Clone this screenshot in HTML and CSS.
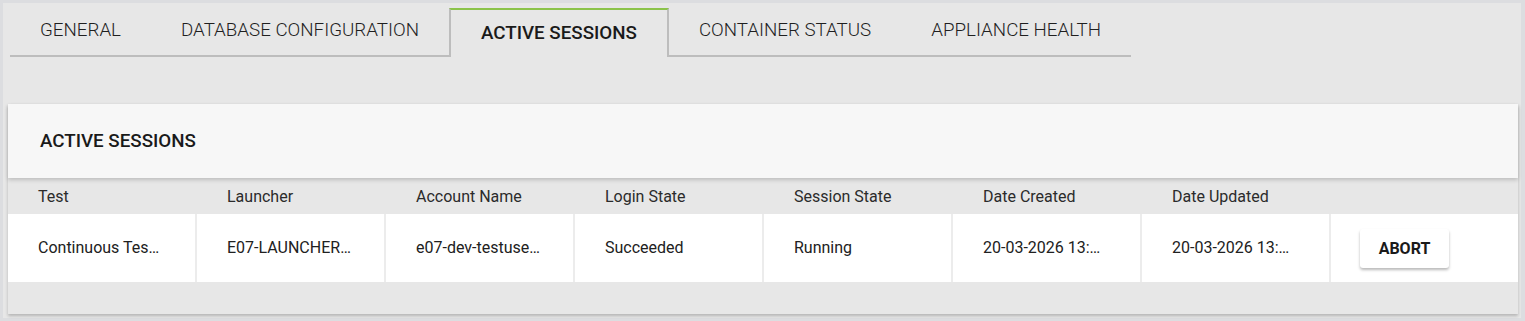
FILE: index.html
```html
<!DOCTYPE html>
<html>
<head>
<meta charset="utf-8">
<link rel="stylesheet" href="styles.css">
</head>
<body>
<div class="frame">
  <nav class="tabs">
    <div class="tab">GENERAL</div>
    <div class="tab">DATABASE CONFIGURATION</div>
    <div class="tab active">ACTIVE SESSIONS</div>
    <div class="tab">CONTAINER STATUS</div>
    <div class="tab">APPLIANCE HEALTH</div>
  </nav>
  <section class="card">
    <header class="card-head">ACTIVE SESSIONS</header>
    <div class="grid thead">
      <div class="th">Test</div>
      <div class="th">Launcher</div>
      <div class="th">Account Name</div>
      <div class="th">Login State</div>
      <div class="th">Session State</div>
      <div class="th">Date Created</div>
      <div class="th">Date Updated</div>
      <div class="th"></div>
    </div>
    <div class="grid trow">
      <div class="td">Continuous Testing Suite</div>
      <div class="td">E07-LAUNCHER-01</div>
      <div class="td">e07-dev-testuser01</div>
      <div class="td">Succeeded</div>
      <div class="td">Running</div>
      <div class="td">20-03-2026 13:42:10</div>
      <div class="td">20-03-2026 13:45:18</div>
      <div class="td action"><button class="btn">ABORT</button></div>
    </div>
    <div class="card-foot"></div>
  </section>
</div>
</body>
</html>
```

FILE: styles.css
```css
html, body {
  margin: 0;
  padding: 0;
}
body {
  background: #dcdde0;
  font-family: Roboto, "Liberation Sans", sans-serif;
  color: #212121;
  width: 1525px;
  height: 321px;
  overflow: hidden;
}
.frame {
  margin: 3px 4px 0 3px;
  height: 315px;
  background: #e7e7e7;
  padding: 5px 3px 0 5px;
  box-sizing: border-box;
}
.tabs {
  display: flex;
  margin-left: 2px;
  height: 49px;
}
.tab {
  padding: 0 30px 3px 30px;
  font-size: 18.75px;
  font-weight: 300;
  line-height: 1;
  display: flex;
  align-items: center;
  border-bottom: 2px solid #bdbdbd;
  color: #1f1f1f;
}
.tab.active {
  font-weight: 500;
  border: 2px solid #bdbdbd;
  border-top: 2px solid #8bc34a;
  border-bottom: none;
  padding: 0 30px;
  color: #1a1a1a;
}
.card {
  margin-top: 47px;
  background: #e7e7e7;
  box-shadow: 0 2px 3px rgba(0,0,0,0.22);
  height: 210px;
  display: flex;
  flex-direction: column;
}
.card-head {
  height: 74px;
  background: #f7f7f7;
  box-shadow: 0 2px 4px rgba(0,0,0,0.18);
  display: flex;
  align-items: center;
  padding-left: 32px;
  font-size: 18.75px;
  font-weight: 500;
  color: #1a1a1a;
  position: relative;
  z-index: 1;
}
.grid {
  display: grid;
  grid-template-columns: repeat(7, 189px) 1fr;
}
.thead {
  height: 36px;
  align-items: center;
  padding-top: 1px;
  box-sizing: border-box;
}
.th {
  padding: 0 30px;
  font-size: 16px;
  color: #2b2b2b;
}
.trow {
  height: 68px;
  background: #ffffff;
}
.td {
  padding: 0 32px 0 30px;
  font-size: 16px;
  color: #212121;
  white-space: nowrap;
  overflow: hidden;
  text-overflow: ellipsis;
  line-height: 68px;
  border-right: 2px solid #ececec;
}
.td:last-child {
  border-right: none;
}
.td.action {
  padding: 0 0 0 29px;
  display: flex;
  align-items: center;
  overflow: visible;
  line-height: 1;
}
.btn {
  width: 89px;
  height: 39px;
  background: #ffffff;
  border: none;
  border-radius: 3px;
  box-shadow: 0 2px 3px rgba(0,0,0,0.28);
  font-family: Roboto, "Liberation Sans", sans-serif;
  font-size: 16px;
  font-weight: 700;
  color: #1a1a1a;
  padding: 0;
}
.card-foot {
  flex: 1;
}
```
